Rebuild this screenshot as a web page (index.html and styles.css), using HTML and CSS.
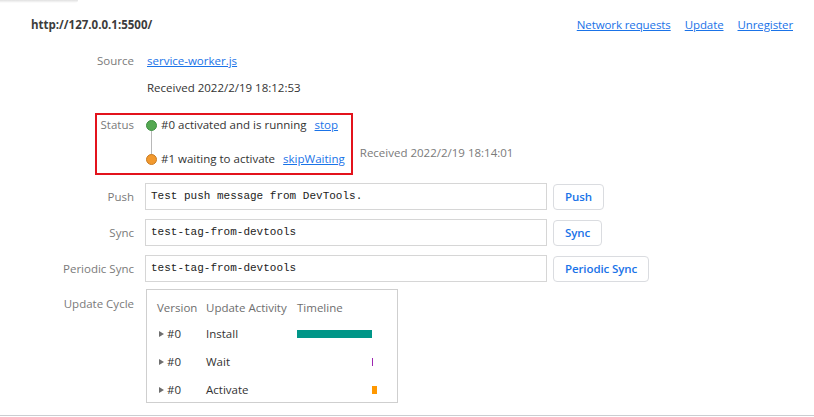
FILE: index.html
```html
<!DOCTYPE html>
<html>
<head>
<meta charset="utf-8">
<link rel="stylesheet" href="styles.css">
</head>
<body>
<div class="page">
  <div class="topshadow"></div>
  <div class="header">
    <div class="origin">http://127.0.0.1:5500/</div>
    <div class="actions">
      <a class="link" href="#">Network requests</a>
      <a class="link" href="#">Update</a>
      <a class="link" href="#">Unregister</a>
    </div>
  </div>

  <div class="row row-source">
    <div class="label">Source</div>
    <div class="value"><a class="link" href="#">service-worker.js</a></div>
  </div>
  <div class="row row-received">
    <div class="label"></div>
    <div class="value">Received 2022/2/19 18:12:53</div>
  </div>

  <div class="row row-status">
    <div class="highlight"></div>
    <div class="label">Status</div>
    <div class="value status-value">
      <div class="versions">
        <div class="vline"></div>
        <div class="version">
          <span class="dot dot-green"></span>
          <span class="vtext">#0 activated and is running</span>
          <a class="link" href="#">stop</a>
        </div>
        <div class="version version-2">
          <span class="dot dot-orange"></span>
          <span class="vtext">#1 waiting to activate</span>
          <a class="link" href="#">skipWaiting</a>
        </div>
      </div>
      <div class="received2">Received 2022/2/19 18:14:01</div>
    </div>
  </div>

  <div class="row row-form row-push">
    <div class="label">Push</div>
    <div class="value form">
      <div class="input">Test push message from DevTools.</div>
      <button class="btn">Push</button>
    </div>
  </div>
  <div class="row row-form">
    <div class="label">Sync</div>
    <div class="value form">
      <div class="input">test-tag-from-devtools</div>
      <button class="btn">Sync</button>
    </div>
  </div>
  <div class="row row-form">
    <div class="label">Periodic Sync</div>
    <div class="value form">
      <div class="input">test-tag-from-devtools</div>
      <button class="btn">Periodic Sync</button>
    </div>
  </div>

  <div class="row row-cycle">
    <div class="label label-cycle">Update Cycle</div>
    <div class="value">
      <div class="cycle">
        <div class="th">Version</div>
        <div class="th">Update Activity</div>
        <div class="th">Timeline</div>

        <div class="td ver"><span class="tri"></span>#0</div>
        <div class="td">Install</div>
        <div class="td track"><span class="bar bar-install" style="margin-left:0;width:75px"></span></div>

        <div class="td ver"><span class="tri"></span>#0</div>
        <div class="td">Wait</div>
        <div class="td track"><span class="bar bar-wait" style="margin-left:75px;width:1px"></span></div>

        <div class="td ver"><span class="tri"></span>#0</div>
        <div class="td">Activate</div>
        <div class="td track"><span class="bar bar-activate" style="margin-left:75px;width:5px"></span></div>
      </div>
    </div>
  </div>
  <div class="bottomline"></div>
</div>
</body>
</html>
```

FILE: styles.css
```css
html, body {
  margin: 0;
  padding: 0;
  background: #ffffff;
}
body {
  font-family: "Open Sans", "Noto Sans", "Liberation Sans", sans-serif;
  font-size: 11.5px;
  line-height: 16px;
  color: #333333;
  width: 814px;
  height: 417px;
  overflow: hidden;
}
.page {
  position: relative;
  width: 814px;
  height: 417px;
}
.topshadow {
  position: absolute;
  left: 0;
  top: 0;
  width: 78px;
  height: 3px;
  background: linear-gradient(to bottom, rgba(0,0,0,0.12), rgba(0,0,0,0));
  border-bottom-right-radius: 3px;
}
.header {
  display: flex;
  justify-content: space-between;
  align-items: flex-start;
  height: 36px;
  padding: 17px 21px 0 31px;
}
.origin {
  font-weight: 700;
  color: #3c3c3c;
}
.actions {
  display: flex;
  gap: 14px;
  letter-spacing: -0.1px;
}
.link {
  color: #1a73e8;
  text-decoration: underline;
}
.row {
  position: relative;
  display: grid;
  grid-template-columns: 134px 1fr;
  column-gap: 13px;
}
.label {
  text-align: right;
  color: #7a7a7a;
}
.row-source { margin-top: 0; }
.row-received { margin-top: 11px; }
.row-status { margin-top: 21px; }
.highlight {
  position: absolute;
  left: 95px;
  top: -4px;
  width: 254px;
  height: 58px;
  border: 2px solid #e3131c;
  pointer-events: none;
}
.status-value {
  display: flex;
  align-items: flex-end;
  margin-left: -1px;
}
.versions {
  position: relative;
  display: flex;
  flex-direction: column;
  gap: 18px;
}
.vline {
  position: absolute;
  left: 5px;
  top: 8px;
  width: 1px;
  height: 34px;
  background: #b8b8b8;
}
.version {
  position: relative;
  display: flex;
  align-items: center;
  white-space: nowrap;
}
.dot {
  width: 11px;
  height: 11px;
  border-radius: 50%;
  margin-right: 4px;
  box-sizing: border-box;
}
.dot-green {
  background: #55a852;
  border: 1px solid #3f8f42;
}
.dot-orange {
  background: #f2992e;
  border: 1px solid #c97c22;
}
.vtext {
  margin-right: 8px;
}
.received2 {
  color: #7a7a7a;
  margin-left: 15px;
  margin-bottom: 6px;
  white-space: nowrap;
}
.row-form {
  margin-top: 9px;
  align-items: center;
}
.row-push { margin-top: 16px; }
.form {
  display: flex;
  align-items: center;
  gap: 6px;
  margin-left: -2px;
}
.input {
  box-sizing: border-box;
  width: 402px;
  height: 27px;
  border: 1px solid #d6d6d6;
  padding: 0 5px;
  font-family: "Liberation Mono", "DejaVu Sans Mono", monospace;
  font-size: 11px;
  line-height: 25px;
  color: #222222;
}
.btn {
  box-sizing: border-box;
  height: 26px;
  padding: 0 11px;
  border: 1px solid #dadce0;
  border-radius: 4px;
  background: #ffffff;
  color: #1a73e8;
  font-family: "Open Sans", "Noto Sans", "Liberation Sans", sans-serif;
  font-size: 11.5px;
  font-weight: 600;
  letter-spacing: -0.1px;
}
.row-cycle {
  margin-top: 7px;
}
.label-cycle {
  padding-top: 7px;
}
.cycle {
  box-sizing: border-box;
  width: 252px;
  margin-left: -1px;
  border: 1px solid #cfcfcf;
  padding: 10px 0 4px 10px;
  display: grid;
  grid-template-columns: 49px 91px 80px;
  row-gap: 12px;
}
.th {
  color: #6e6e6e;
  white-space: nowrap;
  margin-bottom: -2px;
}
.td {
  white-space: nowrap;
  display: flex;
  align-items: center;
}
.ver {
  padding-left: 2px;
}
.tri {
  width: 0;
  height: 0;
  border-top: 3.5px solid transparent;
  border-bottom: 3.5px solid transparent;
  border-left: 5px solid #6e6e6e;
  margin-right: 3px;
}
.bar {
  display: block;
  height: 8px;
  margin-top: -1px;
}
.bar-install { background: #009688; }
.bar-wait { background: #9c27b0; }
.bar-activate { background: #ff9800; }
.bottomline {
  position: absolute;
  left: 0;
  right: 0;
  top: 415px;
  height: 1px;
  background: #cbcdd1;
}
```
